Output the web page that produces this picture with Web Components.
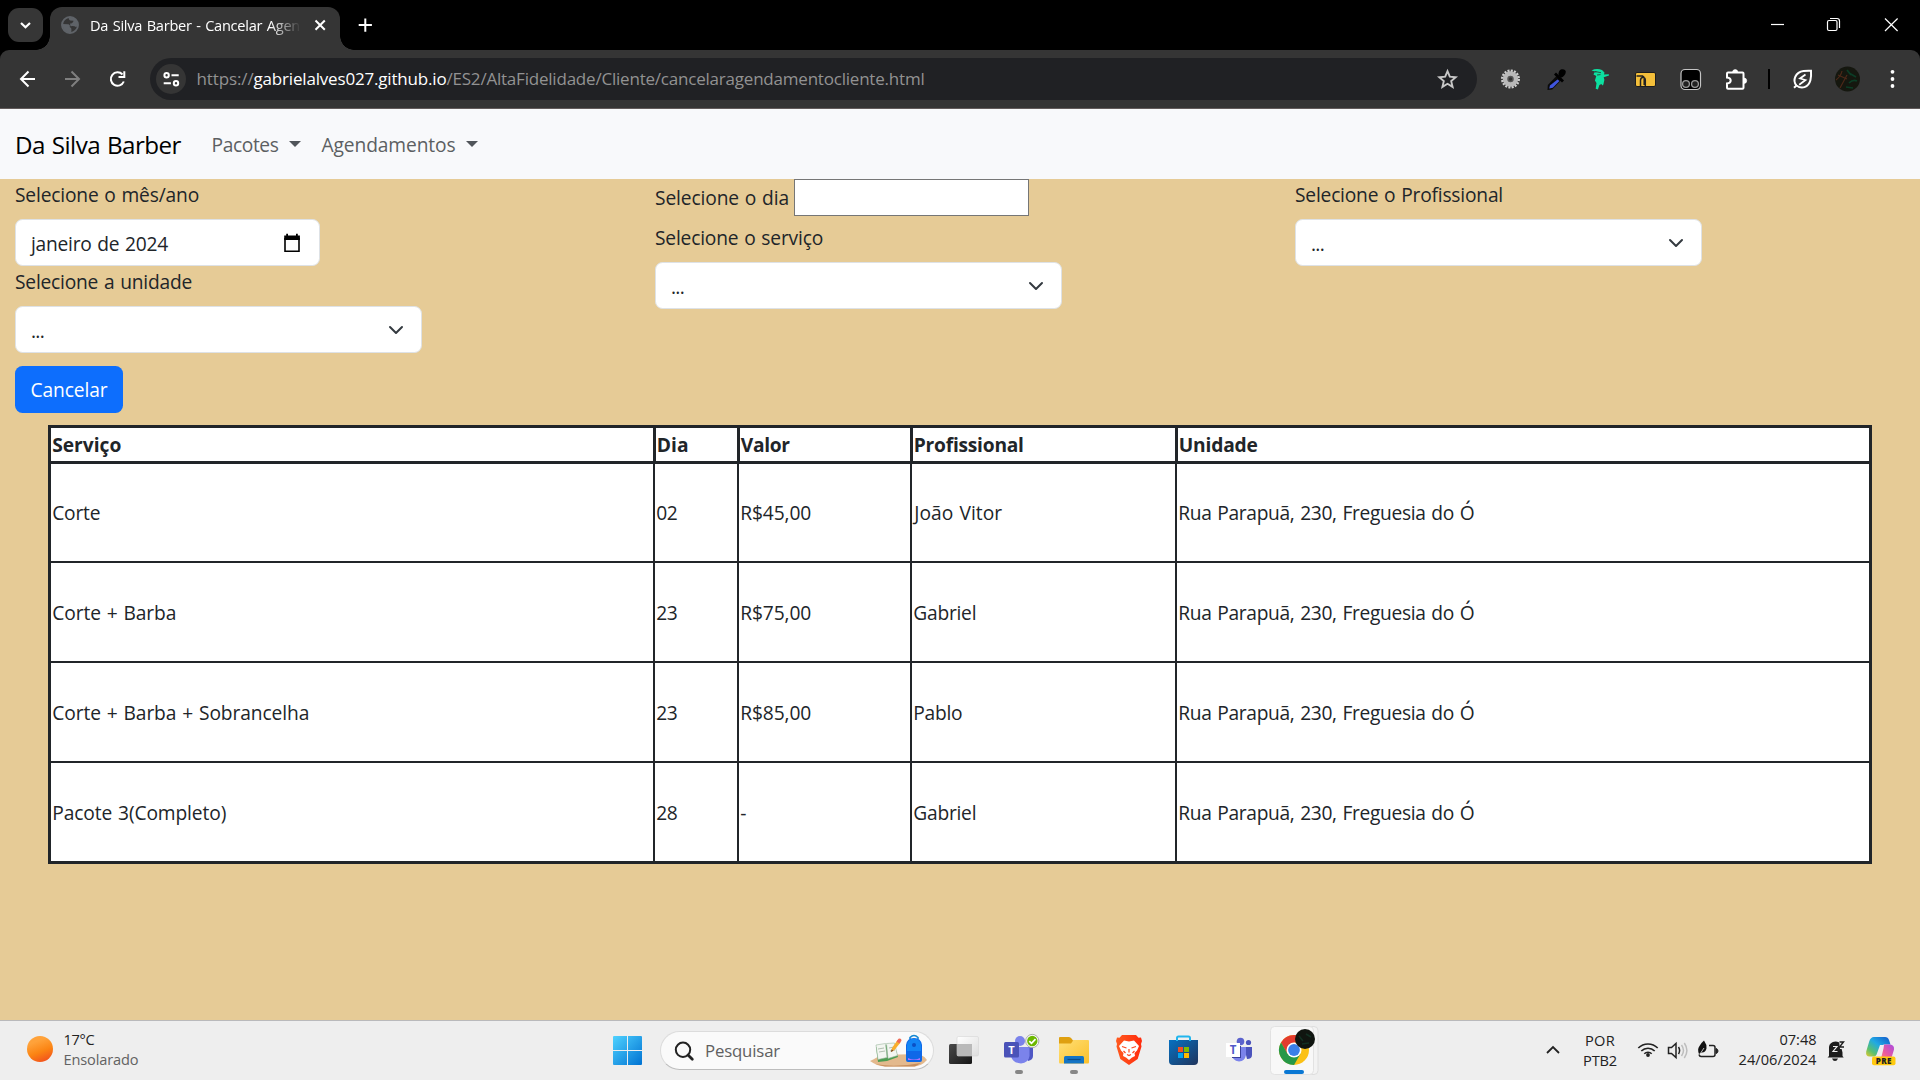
<!DOCTYPE html>
<html lang="pt-BR">
<head>
<meta charset="utf-8">
<title>Da Silva Barber - Cancelar Agendamento</title>
<style>
html,body{margin:0;height:100%;overflow:hidden}
body{font-family:"Open Sans","Noto Sans",sans-serif;font-size:19.2px;line-height:30px;color:#212529}
</style>
</head>
<body>
<desk-screen></desk-screen>
<script>
const define=(name,html,setup)=>customElements.define(name,class extends HTMLElement{
  connectedCallback(){
    if(this.shadowRoot)return;
    const t=document.createElement('template');
    t.innerHTML=html;
    this.attachShadow({mode:'open'}).appendChild(t.content.cloneNode(true));
    if(setup)setup(this,this.shadowRoot);
  }
});

/* Text run spaced so that it takes exactly the width "w" */
define('fit-text','<style>:host{display:inline-block;white-space:pre;flex:none}span{display:inline-block}</style><span><slot></slot></span>',(el,root)=>{
  const w=+el.getAttribute('w'),s=root.querySelector('span');
  if(!w)return;
  s.style.wordSpacing='1px';
  s.style.letterSpacing=(w-s.getBoundingClientRect().width)/el.textContent.length+'px';
  el.style.width=w+'px';
});

const W='fill="none" stroke="#fff"';
/* name: [viewBox, drawing] */
const ICONS={
 down:['8 8 35 34','<rect x="8" y="8" width="35" height="34" rx="11" fill="#363636"/><path d="M21 23l4.500 4.300L30 23" '+W+' stroke-width="2.200"/>'],
 globe:['60 15 20 20','<circle cx="70" cy="25" r="8" fill="none" stroke="#5f6368" stroke-width="1.900"/><path d="M62.500 24l6 .3q2 .8 1.300 2.700l1.400 1.200q.8 2-.2 4.500-7 .4-8.500-6.700zM69 17.500q-.8 2 1 3l3.500.2q-.5 2.800-3.500 2.800l.5 2.700q3.500-.6 5.500.7 1.800-.5 2-2 .2-6-6-8z" fill="#5f6368"/>'],
 x:['312 17 16 16','<path d="M315.500 20.500l9.300 9.300m0-9.300l-9.300 9.300" '+W+' stroke-width="2"/>'],
 plus:['355 15 20 20','<path d="M365.300 18.500v13.200M358.700 25.100h13.200" '+W+' stroke-width="2"/>'],
 min:['1765 12 26 26','<path d="M1771 24.500h13" '+W+' stroke-width="1.200"/>'],
 restore:['1820 12 26 26','<rect x="1827.500" y="20.500" width="9.500" height="10" rx="1.500" '+W+' stroke-width="1.200"/><path d="M1830 18.500h7q2.500 0 2.500 2.500v7" '+W+' stroke-width="1.200"/>'],
 close:['1878 12 26 26','<path d="M1885 18.500l12.600 12.500m0-12.500L1885 31" '+W+' stroke-width="1.200"/>'],
 back:['16 67 24 24','<path d="M35 79H21.500M28.500 71.500L21 79l7.500 7.500" '+W+' stroke-width="2"/>'],
 fwd:['60 67 24 24','<path d="M65 79h13.500M71.500 71.500L79 79l-7.500 7.500" fill="none" stroke="#7f7f7f" stroke-width="2"/>'],
 reload:['105 67 24 24','<path d="M122.500 74.500A6.700 6.700 0 1 0 123.800 81.500" '+W+' stroke-width="2"/><path d="M124.300 71.300v5.700h-5.800" '+W+' stroke-width="2"/>'],
 tune:['156 64 30 30','<circle cx="171" cy="79" r="15" fill="#353535"/><g '+W+' stroke-width="2"><circle cx="166.600" cy="75.200" r="2.200"/><path d="M171.500 75.200h7.200M163.700 83.200h7.200"/><circle cx="176" cy="83.200" r="2.200"/></g>'],
 star:['1436 67 24 24','<path d="M1447.500 71.200l2.300 5.500 5.900.5-4.500 3.900 1.400 5.800-5.100-3.100-5.100 3.100 1.400-5.800-4.500-3.900 5.900-.5z" fill="none" stroke="#c7c7c7" stroke-width="1.900"/>'],
 gear:['1498 67 24 24','<circle cx="1510.500" cy="79" r="8.200" fill="none" stroke="#cfcfcf" stroke-width="2.600" stroke-dasharray="2 1.220"/><circle cx="1510.500" cy="79" r="5.200" fill="none" stroke="#b9b9b9" stroke-width="5"/><circle cx="1510.500" cy="79" r="3.200" fill="#555"/><circle cx="1510.500" cy="79" r="1.700" fill="#333"/>'],
 dropper:['1544 67 24 24','<path d="M1556.500 76l4.500 4.500-8.800 9-4.700.5.300-5z" fill="#0a0a0a"/><path d="M1557.500 79.500l2 1.500-6.700 6.700-3.500.8.600-3z" fill="#4055dd"/><path d="M1555 73.500l8 8" stroke="#000" stroke-width="2.800"/><path d="M1558.500 75.500q-.5-5 3-6.200 4-.5 4.300 2.500-.3 4-4.800 6z" fill="#000"/>'],
 sprite:['1588 67 24 24','<path d="M1591.500 70.500q5-2.500 10.500-.5l2.500 2.500-.5 2 4.800-.3.200 1.300-5.300 1.700.7 2.600-1 4.800-1 1-1-1.500-2 1-1.500 4.400-2.200-.8.800-5.700-1.600-2.500 1.400-4.500-2.800-1.500.8-2 3-.6z" fill="#0ce0a0"/><path d="M1595 71.500l6 1.200M1597 75l3.500-.4" stroke="#27463b" stroke-width=".9"/>'],
 folder:['1633 67 24 24','<rect x="1635.500" y="72.500" width="20" height="14" rx="1.500" fill="#f4bf3a" stroke="#1d1d1d"/><path d="M1636.500 76h6q1.700.5 1.700 3v6M1640.500 86v-5.500q0-3 2.500-3.300 2.300.5 2.300 3V86" fill="none" stroke="#222" stroke-width="1.500"/>'],
 tamper:['1678 67 24 24','<rect x="1681" y="69.500" width="19.500" height="20" rx="4" fill="#000" stroke="#c5c5c5" stroke-width="1.200"/><circle cx="1686" cy="84" r="3.400" fill="#222" stroke="#999" stroke-width="1.300"/><circle cx="1695" cy="84" r="3.400" fill="#222" stroke="#999" stroke-width="1.300"/>'],
 puzzle:['1724 66 24 24','<path d="M1728 71.500h14.500q1 0 1 1v14.200q0 1-1 1H1728q-1 0-1-1V82.500q3.700-.3 3.700-3t-3.700-3V72.500q0-1 1-1z" '+W+' stroke-width="2"/><path d="M1732.600 71.200a2.600 2.600 0 0 1 5.200 0zM1744 77a2.700 2.700 0 0 1 0 5.400z" fill="#fff" stroke="#fff" stroke-width=".6"/>'],
 leaf:['1790 67 24 24','<path d="M1796.500 85.500c-4.500-5-1-13.500 7-14.500 3.800-.4 7.500-.2 7.500-.2s.4 6-.6 9.500c-2 7.500-9 9-13.900 5.200l-2.500 2.200" '+W+' stroke-width="2"/><path d="M1805.500 74.500l-5.500 4 5.500 1.500-6.300 4.700" '+W+' stroke-width="1.700"/>'],
 avatar:['1834 66 26 26','<circle cx="1847.500" cy="79" r="12.500" fill="#15170f"/><path d="M1836 80q5-4 6-9M1840 88l7-13M1838 75l9 4" stroke="#4d2818" stroke-width="1.200" fill="none"/><path d="M1849 73l7 4M1849 83q4-4 8-2M1847 70l4 5M1846 87l7 1" stroke="#0c3d26" stroke-width="1.700" fill="none"/>'],
 dots:['1880 67 24 24','<g fill="#fff"><circle cx="1892.500" cy="71.800" r="1.900"/><circle cx="1892.500" cy="79" r="1.900"/><circle cx="1892.500" cy="86" r="1.900"/></g>'],
 caret:['0 0 12 6','<path d="M0 0h12L6 6z" fill="#50555a"/>'],
 chev:['0 0 16 16','<path d="M2 5l6 6 6-6" fill="none" stroke="#343a40" stroke-width="2" stroke-linecap="round" stroke-linejoin="round"/>'],
 cal:['283 233 18 20','<path d="M285 238v13.200h14V238" fill="none" stroke="#000" stroke-width="1.600"/><path d="M284.200 235.500h2v-1.800h1.800v1.800h8v-1.800h1.800v1.800h2.100v4.500h-15.700z"/>'],
 sun:['20 1021 40 59','<defs><linearGradient id="s" x1=".3" y1="0" x2=".7" y2="1"><stop offset=".2" stop-color="#ffa23a"/><stop offset=".6" stop-color="#fb8413"/><stop offset="1" stop-color="#f2501d"/></linearGradient></defs><circle cx="40" cy="1049" r="13" fill="url(#s)"/>'],
 win:['605 1021 45 59','<defs><linearGradient id="w" gradientUnits="userSpaceOnUse" x1="613" y1="1036" x2="642" y2="1065"><stop stop-color="#4fd2ff"/><stop offset="1" stop-color="#0072d2"/></linearGradient></defs><path fill="url(#w)" d="M614 1036h13v14h-14v-13q0-1 1-1zM628 1036h13q1 0 1 1v13h-14zM613 1051h14v14h-13q-1 0-1-1zM628 1051h14v13q0 1-1 1h-13z"/>'],
 search:['672 1038 24 24','<circle cx="682" cy="1048.800" r="7.200" fill="none" stroke="#222" stroke-width="2"/><path d="M687 1054l4.300 4.300" stroke="#222" stroke-width="2.800" stroke-linecap="round"/>'],
 school:['868 1032 60 38','<path d="M869 1061q8-4 11-6l38-1q5 2 8 6-5 6-14 6.500h-28q-8-.5-15-5.500z" fill="#e3b98d"/><path d="M874 1064q20 4 46-1l-6 3.500h-30z" fill="#c78d5c"/><path d="M875 1047l10-2 9 2 3 10-11 4-9 1z" fill="#4c9d51"/><path d="M875 1045l9.500-1.500 1.500 14-9 2zM885.500 1043.500l8-.5 3 12.500-9.500 3z" fill="#f3f6f1" stroke="#9bb79d" stroke-width=".6"/><path d="M877 1049l6-1m-5 4l6-1m4-3l5-1m-4 4l5-1" stroke="#9fb2a1" stroke-width=".8"/><path d="M890 1052l1-4 5.500-8 3 2.500-6 7.500z" fill="#f9ae2c"/><path d="M895.500 1041.500l2-2.700q3-.8 3 2l-2 2.700z" fill="#ef6a56"/><path d="M890 1052l.6-2.700 1.800 1.500z" fill="#704727"/><path d="M909 1039.500v-2q4-4 8 0v2" fill="none" stroke="#1488d3" stroke-width="1.600"/><path d="M905 1060v-15q1-7 8-7t8 7v15q0 2-2 2h-12q-2 0-2-2z" fill="#0f68e8"/><path d="M906 1051v-6q1-6 7-6.500 6 .5 7 6.500v6z" fill="#1385f5"/><path d="M907 1058q6 3 12 0v2h-12z" fill="#ae72ff"/><circle cx="913" cy="1045" r="2" fill="#0c50c4"/>'],
 view:['941 1021 45 59','<defs><linearGradient id="v" x1="0" y1="0" x2="1" y2="1"><stop stop-color="#4a4a4a"/><stop offset="1" stop-color="#161616"/></linearGradient><linearGradient id="v2" x1="0" y1="0" x2="1" y2="1"><stop stop-color="#fff"/><stop offset="1" stop-color="#ddd"/></linearGradient></defs><rect x="949" y="1044" width="23" height="20" rx="1.500" fill="url(#v)"/><rect x="957" y="1036.500" width="21.500" height="19.500" rx="1.500" fill="url(#v2)" stroke="#d5d5d5" stroke-width=".6"/><path d="M957 1044h15v12h-15z" fill="#b9b9b9"/>'],
 teams:['1000 1021 45 59','<circle cx="1020" cy="1041" r="5" fill="#7b83eb"/><path d="M1025 1047h8v9q0 4-5 5z" fill="#4f57c4"/><path d="M1011 1047h17q1.500 0 1.500 1.500v7.500q-1 7-8.500 7.500-8-.5-10-7z" fill="#7b83eb"/><rect x="1004" y="1042" width="15" height="15.500" rx="1.500" fill="#4a52b8"/><text x="1011.500" y="1054" font-size="11" font-weight="700" text-anchor="middle" fill="#fff">T</text><circle cx="1032.300" cy="1041" r="6.600" fill="#fff" stroke="#a8a8a8" stroke-width="1"/><circle cx="1032.300" cy="1041" r="5.200" fill="#6bb700"/><path d="M1029.300 1041.200l2.200 2.200 4-4.300" fill="none" stroke="#fff" stroke-width="1.700"/><rect x="1015" y="1070" width="8" height="4" rx="2" fill="#868686"/>'],
 files:['1052 1021 45 59','<defs><linearGradient id="f" x1="0" y1="0" x2="1" y2="1"><stop stop-color="#ffdf76"/><stop offset="1" stop-color="#fbc02a"/></linearGradient></defs><path d="M1059 1046v-8q0-1 1-1h9q1.500 0 2.500 1.500l1.500 2h14v4z" fill="#dfa011"/><path d="M1059 1043.500h12l2.500-3.500H1088q1 0 1 1v21q0 1.500-1 1.500h-28q-1 0-1-1.500z" fill="url(#f)"/><path d="M1064 1063.500v-6q0-1.500 1.500-1.500h17q1.500 0 1.500 1.500v6z" fill="#1474c4"/><path d="M1067.500 1059.500h13" stroke="#0b4c88" stroke-width="1.200"/><rect x="1070" y="1070" width="8" height="4" rx="2" fill="#868686"/>'],
 brave:['1107 1021 45 59','<defs><linearGradient id="b"><stop stop-color="#ff5a1f"/><stop offset="1" stop-color="#ff2a0c"/></linearGradient></defs><path d="M1122 1035h14l2.500 2.800 2.500-.3 1 3.500-1 3 .5 2.500-3.800 12.500-8.700 6-8.700-6-3.800-12.500.5-2.500-1-3 1-3.500 2.500.3z" fill="url(#b)"/><path d="M1129 1041.500l5-1 5 5.500-2 4.500-2.500 2.500.5 3-3 1.500-3 2.500-3-2.500-3-1.500.5-3-2.500-2.500-2-4.500 5-5.500z" fill="#fff"/><path d="M1122 1046.500l4.500 1.500M1136 1046.500l-4.500 1.500M1127 1054.500l2 1 2-1M1129 1049v3.500M1123.500 1051l2 2M1134.500 1051l-2 2" stroke="#ff451b" stroke-width="1.200" fill="none"/>'],
 store:['1161 1021 45 59','<defs><linearGradient id="m" x1="0" y1="0" x2="1" y2="1"><stop stop-color="#0671c2"/><stop offset="1" stop-color="#20345c"/></linearGradient></defs><path d="M1169 1040h29v21q0 4-4 4h-21q-4 0-4-4z" fill="url(#m)"/><path d="M1177 1041v-3q0-1.500 1.500-1.500h10q1.500 0 1.500 1.500v3" fill="none" stroke="#21b5ed" stroke-width="2"/><path fill="#f25022" d="M1178 1047h5v5h-5z"/><path fill="#7fba00" d="M1184 1047h5v5h-5z"/><path fill="#00a4ef" d="M1178 1053h5v5h-5z"/><path fill="#ffb900" d="M1184 1053h5v5h-5z"/>'],
 teams2:['1217 1021 45 59','<circle cx="1240.500" cy="1041.500" r="3.800" fill="#5b62cd"/><circle cx="1248.500" cy="1042.500" r="2.600" fill="#4b53bc"/><path d="M1244 1047h8v8q0 4-5 4z" fill="#4b53bc"/><path d="M1232 1047h14v8q-1 6-7 6.500-7-1-7-7z" fill="#7b83eb"/><path d="M1240 1046h1v12h-9v-1h8z" fill="#3a409a"/><rect x="1226" y="1043" width="14" height="14" fill="#fff"/><text x="1233.200" y="1054.300" font-size="11.500" font-weight="700" text-anchor="middle" fill="#5059c9">T</text>'],
 chrome:['1268 1021 52 59','<rect x="1276" y="1026.500" width="42" height="48" rx="4" fill="#f3f3f3" stroke="#dedede"/><rect x="1270.500" y="1026.500" width="43" height="48" rx="4" fill="#f8f8f8" stroke="#e2e2e2"/><circle cx="1294" cy="1050" r="15" fill="#fbc116"/><path d="M1281 1042.500A15 15 0 0 1 1307 1042.500H1294L1287.500 1054z" fill="#e33b2e"/><path d="M1281 1042.500A15 15 0 0 0 1294 1065l6.500-11.250-6.500-3.750-6.500 3.750z" fill="#279847"/><circle cx="1294" cy="1050" r="7.500" fill="#fff"/><circle cx="1294" cy="1050" r="5.900" fill="#3a7fe8"/><circle cx="1305" cy="1039" r="10" fill="#101510"/><path d="M1299 1036l4 5M1306 1034l5 3M1302 1044l7-1" stroke="#123022" stroke-width="1.500"/><rect x="1284" y="1070" width="20" height="4" rx="2" fill="#0a78d4"/>'],
 up:['1541 1021 24 59','<path d="M1547 1053l6-6 6 6" fill="none" stroke="#222" stroke-width="1.800"/>'],
 wifi:['1636 1021 24 59','<g fill="none" stroke="#222" stroke-width="1.600"><path d="M1638.300 1048a13.600 13.600 0 0 1 19.400 0M1641.300 1051a9.500 9.500 0 0 1 13.400 0M1644.300 1053.800a5.300 5.300 0 0 1 7.400 0"/></g><circle cx="1648" cy="1055" r="1.900" fill="#222"/>'],
 vol:['1666 1021 24 59','<path d="M1668.500 1047.500h3l4.500-4v14l-4.500-4h-3z" fill="none" stroke="#222" stroke-width="1.500"/><path d="M1678.500 1047q2.200 3.500 0 7" fill="none" stroke="#222" stroke-width="1.500"/><path d="M1681.500 1045q4 5.500 0 11M1684.300 1043q5.200 7.500 0 15" fill="none" stroke="#bdbdbd" stroke-width="1.500"/>'],
 bat:['1696 1021 24 59','<path d="M1709 1045.500h4q2 0 2 2v7q0 2-2 2h-12q-1.500 0-2-2" fill="none" stroke="#222" stroke-width="1.500"/><path d="M1716 1048.500q2 .5 2 2.500t-2 2.500z" fill="#222" stroke="#222"/><path d="M1704 1040.500q3 4 2.500 8-1 4-4.500 4l-3 1.500q-2-5 .5-8 1-2.500 4.500-5.500z" fill="#111"/><path d="M1700 1054l4-6" stroke="#eee" stroke-width=".8"/>'],
 bell:['1824 1021 24 59','<path d="M1829 1056v-9q.5-5 6.500-5.500 4 0 5 3l2 8v3.500l1.200 1.500h-16.200z" fill="#1c1c1c"/><path d="M1832 1058.500h6q-1 2.500-3 2.500t-3-2.500z" fill="#1c1c1c"/><path d="M1833 1046.500h4l-4 5h4.500" fill="none" stroke="#eee" stroke-width="1.200"/><path d="M1839 1040.500h6v8.500h-5z" fill="#eee"/><path d="M1839.500 1042h4l-4 5h4.500" fill="none" stroke="#1c1c1c" stroke-width="1.400"/>'],
 copilot:['1862 1021 38 59','<defs><linearGradient id="c1" x1="1" y1="0" x2="0" y2="1"><stop stop-color="#1355c9"/><stop offset=".45" stop-color="#20a9e4"/><stop offset=".75" stop-color="#58c070"/><stop offset="1" stop-color="#e5c92a"/></linearGradient><linearGradient id="c2" x1="1" y1="0" x2="0" y2="1"><stop stop-color="#a94ae0"/><stop offset=".5" stop-color="#ee5b9b"/><stop offset="1" stop-color="#ffad59"/></linearGradient></defs><path d="M1874 1037h11q3 0 4 3l1.500 4.500h-6q-3 0-4 4l-2 7q-1 1-4 1h-5q-4 0-3.300-5l3-10q1.300-4.500 4.800-4.500z" fill="url(#c1)"/><path d="M1884 1044.500h6q4.500.5 4 5l-3 10q-1 4-5 4h-9q3-1 4-5l2.500-10q.5-3 .5-4z" fill="url(#c2)"/><path d="M1880 1045h4q-2 1-3 5l-2.500 7h-4q2-1 3-5z" fill="#f3eaf2"/><rect x="1872" y="1056.500" width="23.500" height="8.800" rx="2" fill="#ffc90f"/><text x="1883.800" y="1064" font-size="8" font-weight="800" letter-spacing=".4" text-anchor="middle" fill="#222">PRE</text>']
};
define('ui-icon','<style>:host{display:block;flex:none}svg{display:block;width:100%;height:100%}</style>',(el,root)=>{
  const [vb,body]=ICONS[el.getAttribute('name')],p=vb.split(' ');
  if(!el.style.width){el.style.width=p[2]+'px';el.style.height=p[3]+'px';}
  root.innerHTML+='<svg viewBox="'+vb+'">'+body+'</svg>';
});

define('browser-tabs',`<style>
:host{display:flex;height:50px;background:#000;align-items:flex-start;color:#fff;font-size:14.6px}
.tab{display:flex;align-items:center;width:290px;height:43px;margin:7px 0 0 7px;background:#353535;border-radius:12px 12px 0 0;box-sizing:border-box;padding-left:10px;position:relative}
.tab:before,.tab:after{content:"";position:absolute;bottom:0;width:14px;height:14px;left:-14px;background:radial-gradient(circle at 0 0,#0000 13.500px,#353535 14px)}
.tab:after{left:auto;right:-14px;background:radial-gradient(circle at 100% 0,#0000 13.500px,#353535 14px)}
.title{width:210px;overflow:hidden;margin:-8px 0 0 10px;height:30px;line-height:30px;-webkit-mask:linear-gradient(90deg,#000 180px,#0000 211px);mask:linear-gradient(90deg,#000 180px,#0000 211px)}
.win{margin:12px 0 0 auto;display:flex}
</style>
<ui-icon name="down" style="width:35px;height:34px;margin:8px 0 0 8px"></ui-icon>
<div class="tab"><ui-icon name="globe" style="width:20px;height:20px;margin-top:-7px"></ui-icon><div class="title"><fit-text w="210">Da Silva Barber - Cancelar Agen</fit-text></div><ui-icon name="x" style="width:16px;height:16px;margin:-7px 0 0 12px"></ui-icon></div>
<ui-icon name="plus" style="width:20px;height:20px;margin:15px 0 0 15px"></ui-icon>
<div class="win"><ui-icon name="min"></ui-icon><ui-icon name="restore" style="width:26px;height:26px;margin-left:29px"></ui-icon><ui-icon name="close" style="width:26px;height:26px;margin:0 16px 0 32px"></ui-icon></div>`);

define('browser-toolbar',`<style>
:host{display:block;background:#000}
.bar{height:59px;background:#353535;border-radius:9px 9px 0 0;border-bottom:1px solid #625b5b;box-sizing:border-box;display:flex;align-items:center;font-size:17px}
.omni{width:1327px;height:42px;border-radius:21px;background:#202124;display:flex;align-items:center;margin-left:21px;box-sizing:border-box;padding-left:6px;color:#929292}
.sep{width:2px;height:20px;background:#000;margin-left:20px}
b{font-weight:400;color:#fff}
ui-icon{margin-left:var(--g)}
</style><div class="bar">
<ui-icon name="back" style="--g:16px"></ui-icon><ui-icon name="fwd" style="--g:20px"></ui-icon><ui-icon name="reload" style="--g:21px"></ui-icon>
<div class="omni"><ui-icon name="tune"></ui-icon><fit-text w="57" style="margin-left:10.500px">https://</fit-text><b><fit-text w="193">gabrielalves027.github.io</fit-text></b><fit-text w="478">/ES2/AltaFidelidade/Cliente/cancelaragendamentocliente.html</fit-text><ui-icon name="star" style="margin:0 17px 0 auto"></ui-icon></div>
<ui-icon name="gear" style="--g:21px"></ui-icon><ui-icon name="dropper" style="--g:22px"></ui-icon><ui-icon name="sprite" style="--g:20px"></ui-icon><ui-icon name="folder" style="--g:21px"></ui-icon><ui-icon name="tamper" style="--g:21px"></ui-icon><ui-icon name="puzzle" style="--g:22px"></ui-icon><div class="sep"></div><ui-icon name="leaf" style="--g:20px"></ui-icon><ui-icon name="avatar" style="--g:20px"></ui-icon><ui-icon name="dots" style="--g:20px"></ui-icon>
</div>`);

define('site-nav',`<style>
:host{display:flex;height:70px;background:#f8f9fb;align-items:center;color:#5c5f62}
.brand{font-size:24.2px;color:#000;margin-left:15px}
fit-text{padding-top:2px}
ui-icon{margin-top:-1px}
</style><div class="brand"><fit-text w="166">Da Silva Barber</fit-text></div>
<fit-text w="67" style="margin-left:30.500px">Pacotes</fit-text><ui-icon name="caret" style="width:12px;height:6px;margin-left:10.500px"></ui-icon>
<fit-text w="134" style="margin-left:20.500px">Agendamentos</fit-text><ui-icon name="caret" style="width:12px;height:6px;margin-left:10.500px"></ui-icon>`);

define('form-label','<style>:host{display:block;height:29px;padding-top:1px;margin-bottom:10px}</style><slot></slot>');
define('form-box',`<style>:host{display:flex;box-sizing:border-box;width:407px;height:47px;border:1px solid #dee2e6;border-radius:7.500px;background:#fff;align-items:center;justify-content:space-between;padding:0 15px}</style><slot></slot>`);
define('form-select',`<style>fit-text{margin-top:3px}</style><form-box><fit-text w="13">...</fit-text><ui-icon name="chev" style="width:16px;height:16px;margin:0 2px 0 0"></ui-icon></form-box>`);
define('booking-filter',`<style>
:host{display:grid;grid-template-columns:640px 640px 1fr;padding-left:15px;height:174px}
form-select{display:block}
.day{display:flex;height:43px}.day fit-text{margin-top:4px}
.day input{all:unset;box-sizing:border-box;width:235px;height:37px;background:#fff;border:1px solid #767676;margin-left:5px}
</style>
<div><form-label><fit-text w="184">Selecione o mês/ano</fit-text></form-label>
<form-box style="width:305px"><fit-text w="137" style="margin-top:2px">janeiro de 2024</fit-text><ui-icon name="cal" style="width:18px;height:20px;margin-right:3px;margin-top:1px"></ui-icon></form-box>
<form-label><fit-text w="177">Selecione a unidade</fit-text></form-label><form-select></form-select></div>
<div><div class="day"><fit-text w="134">Selecione o dia</fit-text><input></div><form-label><fit-text w="168">Selecione o serviço</fit-text></form-label><form-select></form-select></div>
<div><form-label><fit-text w="208">Selecione o Profissional</fit-text></form-label><form-select></form-select></div>`);
define('action-button',`<style>:host{display:flex;width:108px;height:47px;margin:13px 0 12px 15px;border-radius:7.500px;background:#0d6efd;color:#fff;align-items:center;justify-content:center}</style><slot></slot>`);

const WIDTHS={'Corte':48,'Corte + Barba':124,'Corte + Barba + Sobrancelha':257,'Pacote 3(Completo)':174,'João Vitor':88,'Gabriel':63,'Pablo':49,'-':7,'Serviço':69,'Dia':32,'Valor':49,'Profissional':110,'Unidade':79};
const cell=t=>`<fit-text w="${WIDTHS[t]||(t.startsWith('R$')?71:t.startsWith('Rua')?296:21)}"${t[0]==='J'?' class="j"':''}>${t}</fit-text>`;
const ADDR='Rua Parapuã, 230, Freguesia do Ó';
const ROWS=[['Corte','02','R$45,00','João Vitor'],['Corte + Barba','23','R$75,00','Gabriel'],['Corte + Barba + Sobrancelha','23','R$85,00','Pablo'],['Pacote 3(Completo)','28','-','Gabriel']];
define('booking-table',`<style>
:host{display:block;margin-left:48px;width:1824px}
table{border-collapse:collapse;table-layout:fixed;width:1824px;background:#fff;border:3px solid #212529}
th,td{padding:0 1.250px;text-align:left;box-sizing:border-box;vertical-align:middle}
th{border:3px solid #212529;height:36px}td{border:2px solid #212529;height:100px;padding-top:2px}
tbody tr:first-child td{height:99px;padding-top:1px}tbody tr:last-child td{height:101px;padding-top:3px}
fit-text{display:block}
.j{padding-left:1px}
</style><table><colgroup><col style="width:604.500px"><col style="width:84px"><col style="width:173px"><col style="width:265px"><col></colgroup>
<thead><tr>${['Serviço','Dia','Valor','Profissional','Unidade'].map(t=>`<th>${cell(t)}</th>`).join('')}</tr></thead>
<tbody>${ROWS.map(r=>`<tr>${[...r,ADDR].map(t=>`<td>${cell(t)}</td>`).join('')}</tr>`).join('')}</tbody></table>`);

define('task-bar',`<style>
:host{display:flex;height:60px;box-sizing:border-box;border-top:1px solid #b9b9bb;background:#eee;font-size:14.600px;line-height:20px;color:#222}
.two{display:flex;flex-direction:column;padding-top:8px}
.pill{display:flex;align-items:center;box-sizing:border-box;width:274px;height:39px;border:1px solid #dcdcdc;border-bottom-color:#bdbdbd;border-radius:20px;background:#fafafa;margin:10px 7.500px 0 9.500px;padding-left:12px;color:#606060;font-size:16.800px}
.pill fit-text{margin-left:8.500px}
.r{align-items:flex-end}.c{align-items:center;padding-top:9px}
</style>
<ui-icon name="sun" style="width:40px;height:59px;margin-left:20px"></ui-icon>
<div class="two" style="margin-left:3.500px;width:541.500px"><fit-text w="31">17°C</fit-text><fit-text w="75" style="color:#626262">Ensolarado</fit-text></div>
<ui-icon name="win"></ui-icon>
<div class="pill"><ui-icon name="search"></ui-icon><fit-text w="75">Pesquisar</fit-text><ui-icon name="school" style="width:60px;height:38px;margin:0 4px 0 auto"></ui-icon></div>
<ui-icon name="view" style="width:45px;height:59px"></ui-icon>
<ui-icon name="teams" style="width:45px;height:59px;margin-left:14px"></ui-icon>
<ui-icon name="files" style="width:45px;height:59px;margin-left:7px"></ui-icon>
<ui-icon name="brave" style="width:45px;height:59px;margin-left:10px"></ui-icon>
<ui-icon name="store" style="width:45px;height:59px;margin-left:9px"></ui-icon>
<ui-icon name="teams2" style="width:45px;height:59px;margin-left:11px"></ui-icon>
<ui-icon name="chrome" style="width:52px;height:59px;margin-left:6px"></ui-icon>
<ui-icon name="up" style="width:24px;height:59px;margin-left:221px"></ui-icon>
<div class="two c" style="margin-left:17px;width:36px"><fit-text w="30">POR</fit-text><fit-text w="34">PTB2</fit-text></div>
<ui-icon name="wifi" style="width:24px;height:59px;margin-left:18px"></ui-icon>
<ui-icon name="vol" style="width:24px;height:59px;margin-left:6px"></ui-icon>
<ui-icon name="bat" style="width:24px;height:59px;margin-left:6px"></ui-icon>
<div class="two r" style="margin-left:8px;width:88.500px"><fit-text w="37">07:48</fit-text><fit-text w="78">24/06/2024</fit-text></div>
<ui-icon name="bell" style="width:24px;height:59px;margin-left:7.500px"></ui-icon>
<ui-icon name="copilot" style="width:38px;height:59px;margin-left:14px"></ui-icon>`);

define('desk-screen',`<style>:host{display:flex;flex-direction:column;width:1920px;height:1080px}
main{flex:1;background:#e6cb96}</style>
<browser-tabs></browser-tabs><browser-toolbar></browser-toolbar><site-nav></site-nav>
<main><booking-filter></booking-filter><action-button><fit-text w="77" style="padding-top:1px">Cancelar</fit-text></action-button><booking-table></booking-table></main>
<task-bar></task-bar>`);
</script>
</body>
</html>
